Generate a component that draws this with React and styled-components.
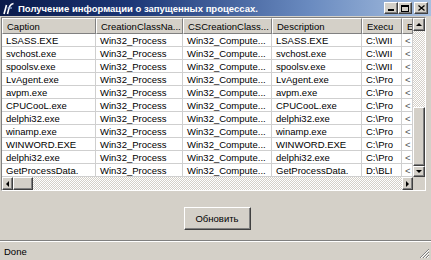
import React from "react";
import styled, { createGlobalStyle } from "styled-components";

const GlobalStyle = createGlobalStyle`
  html, body {
    margin: 0;
    padding: 0;
    background: #d4d0c8;
  }
  body {
    font-family: "Liberation Sans", Arial, sans-serif;
  }
  * {
    box-sizing: border-box;
  }
`;

const Window = styled.div`
  width: 431px;
  height: 260px;
  display: flex;
  flex-direction: column;
  background: #d4d0c8;
  overflow: hidden;
`;

const TitleBar = styled.div`
  height: 16px;
  display: flex;
  align-items: center;
  padding: 0 3px 0 2px;
  background: linear-gradient(90deg, #0a1a4a 0%, #1b3676 30%, #6a8bc0 72%, #a8c0e0 100%);
`;

const TitleIcon = styled.svg`
  width: 13px;
  height: 13px;
  flex: none;
`;

const TitleText = styled.span`
  flex: 1;
  margin-left: 3px;
  color: #fff;
  font-weight: bold;
  font-size: 9.5px;
  white-space: nowrap;
`;

const CaptionButtons = styled.div`
  display: flex;
`;

const CaptionButton = styled.div`
  width: 14px;
  height: 12px;
  margin-left: ${({ $gap }) => $gap || 0}px;
  display: flex;
  align-items: center;
  justify-content: center;
  background: #d4d0c8;
  border: 1px solid;
  border-color: #fff #404040 #404040 #fff;
  box-shadow: inset -1px -1px #808080;
`;

const Frame = styled.div`
  margin: 1px 0 0 1px;
  width: 425px;
  display: grid;
  grid-template-columns: 411px 12px;
  grid-template-rows: auto 13px;
  border: 1px solid;
  border-color: #808080 #fff #fff #808080;
  background: #fff;
`;

const Table = styled.div`
  display: grid;
  grid-template-columns: 94px 87px 89px 90px 40px 11px;
  overflow: hidden;
  background: #fff;
`;

const HeadCell = styled.div`
  height: 16px;
  display: flex;
  align-items: center;
  padding-left: 4px;
  font-size: 9.5px;
  color: #000;
  white-space: nowrap;
  overflow: hidden;
  background: #d4d0c8;
  border: 1px solid;
  border-color: #fff #808080 #808080 #fff;
`;

const Cell = styled.div`
  height: 13px;
  display: flex;
  align-items: center;
  padding-left: ${({ $pad }) => $pad ?? 4}px;
  font-size: 9.5px;
  color: ${({ $muted }) => ($muted ? "#555" : "#000")};
  white-space: nowrap;
  overflow: hidden;
  border-right: 1px solid #cfcfcf;
  border-bottom: 1px solid #cfcfcf;
`;

const VScroll = styled.div`
  display: flex;
  flex-direction: column;
  background: #d4d0c8;
`;

const HScroll = styled.div`
  display: flex;
  background: #d4d0c8;
`;

const Track = styled.div`
  flex: 1;
  background-color: #fff;
  background-image: conic-gradient(#d4d0c8 25%, #fff 0 50%, #d4d0c8 0 75%, #fff 0);
  background-size: 2px 2px;
`;

const ScrollButton = styled.div`
  width: ${({ $w }) => $w}px;
  height: ${({ $h }) => $h}px;
  flex: none;
  display: flex;
  align-items: center;
  justify-content: center;
  background: #d4d0c8;
  border: 1px solid;
  border-color: #fff #404040 #404040 #fff;
  box-shadow: inset -1px -1px #808080;
`;

const Corner = styled.div`
  background: #d4d0c8;
`;

const Body = styled.div`
  flex: 1;
  display: flex;
  justify-content: center;
  align-items: flex-start;
  padding-top: 16px;
  border-bottom: 1px solid #808080;
`;

const PushButton = styled.button`
  width: 67px;
  height: 23px;
  margin-left: 3px;
  padding: 0;
  font-family: inherit;
  font-size: 9.5px;
  color: #000;
  background: #d4d0c8;
  border: 1px solid;
  border-color: #fff #404040 #404040 #fff;
  box-shadow: inset -1px -1px #808080;
`;

const StatusBar = styled.div`
  height: 19px;
  display: flex;
  align-items: center;
  padding-left: 4px;
  font-size: 9.5px;
  color: #000;
  border-top: 1px solid #fff;
  position: relative;
`;

const Grip = styled.svg`
  position: absolute;
  right: 1px;
  bottom: 1px;
  width: 11px;
  height: 11px;
`;

const Arrow = ({ dir }) => {
  const pts = {
    up: "0,3 3,0 6,3",
    down: "0,0 6,0 3,3",
    left: "3,0 3,6 0,3",
    right: "0,0 0,6 3,3",
  }[dir];
  const vertical = dir === "up" || dir === "down";
  return (
    <svg width={vertical ? 6 : 3} height={vertical ? 3 : 6}>
      <polygon points={pts} fill="#000" />
    </svg>
  );
};

const columns = [
  "Caption",
  "CreationClassNa...",
  "CSCreationClass...",
  "Description",
  "Execu",
  "E",
];

const rows = [
  ["LSASS.EXE", "C:\\WII"],
  ["svchost.exe", "C:\\WII"],
  ["spoolsv.exe", "C:\\WII"],
  ["LvAgent.exe", "C:\\Pro"],
  ["avpm.exe", "C:\\Pro"],
  ["CPUCooL.exe", "C:\\Pro"],
  ["delphi32.exe", "C:\\Pro"],
  ["winamp.exe", "C:\\Pro"],
  ["WINWORD.EXE", "C:\\Pro"],
  ["delphi32.exe", "C:\\Pro"],
  ["GetProcessData.", "D:\\BLI"],
];

export default function App() {
  return (
    <>
      <GlobalStyle />
      <Window>
        <TitleBar>
          <TitleIcon viewBox="0 0 13 13">
            <path d="M2 12 L4.5 3" stroke="#fff" strokeWidth="1.6" fill="none" />
            <path d="M5.5 12 C7 6 7.5 2 11.5 1.5" stroke="#fff" strokeWidth="1.6" fill="none" />
            <path d="M5.5 6 H10" stroke="#9fb8e0" strokeWidth="1.2" />
          </TitleIcon>
          <TitleText>Получение информации о запущенных процессах.</TitleText>
          <CaptionButtons>
            <CaptionButton>
              <svg width="6" height="6"><rect x="0" y="4" width="6" height="2" fill="#000" /></svg>
            </CaptionButton>
            <CaptionButton>
              <svg width="8" height="7"><rect x="0.5" y="0.5" width="7" height="6" fill="none" stroke="#000" /><rect x="0" y="0" width="8" height="2" fill="#000" /></svg>
            </CaptionButton>
            <CaptionButton $gap={2}>
              <svg width="7" height="6"><path d="M0.5 0.5 L6.5 5.5 M6.5 0.5 L0.5 5.5" stroke="#000" strokeWidth="1.3" /></svg>
            </CaptionButton>
          </CaptionButtons>
        </TitleBar>

        <Frame>
          <Table>
            {columns.map((c) => (
              <HeadCell key={c}>{c}</HeadCell>
            ))}
            {rows.map(([name, path], i) => (
              <React.Fragment key={i}>
                <Cell>{name}</Cell>
                <Cell>Win32_Process</Cell>
                <Cell>Win32_Compute...</Cell>
                <Cell>{name}</Cell>
                <Cell>{path}</Cell>
                <Cell $pad={3} $muted>&lt;</Cell>
              </React.Fragment>
            ))}
          </Table>
          <VScroll>
            <ScrollButton $w={12} $h={13}>
              <Arrow dir="up" />
            </ScrollButton>
            <Track />
            <ScrollButton $w={12} $h={59} />
            <ScrollButton $w={12} $h={11}>
              <Arrow dir="down" />
            </ScrollButton>
          </VScroll>
          <HScroll>
            <ScrollButton $w={11} $h={13}>
              <Arrow dir="left" />
            </ScrollButton>
            <ScrollButton $w={20} $h={13} />
            <Track />
            <ScrollButton $w={11} $h={13}>
              <Arrow dir="right" />
            </ScrollButton>
          </HScroll>
          <Corner />
        </Frame>

        <Body>
          <PushButton>Обновить</PushButton>
        </Body>

        <StatusBar>
          Done
          <Grip viewBox="0 0 11 11">
            <path d="M10 1 L1 10 M10 4 L4 10 M10 7 L7 10" stroke="#808080" strokeWidth="1" />
            <path d="M10 2 L2 10 M10 5 L5 10 M10 8 L8 10" stroke="#fff" strokeWidth="1" />
          </Grip>
        </StatusBar>
      </Window>
    </>
  );
}
